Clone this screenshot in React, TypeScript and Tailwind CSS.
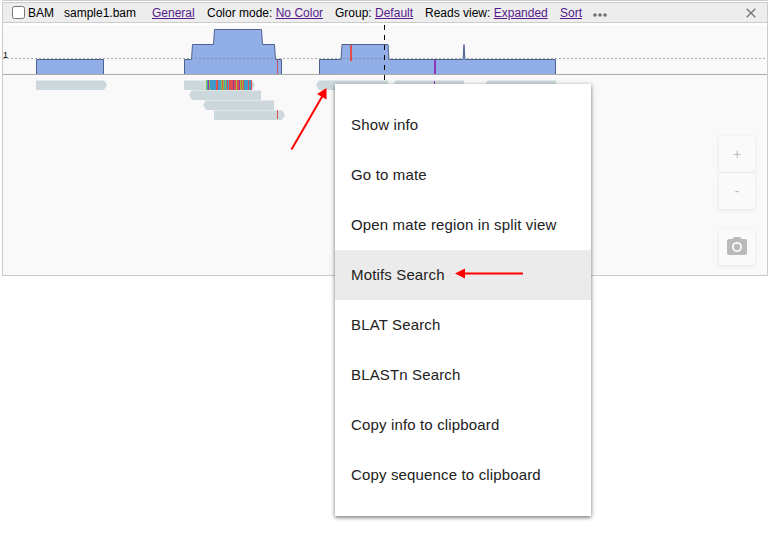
import React from "react";

const menuItems = [
  "Show info",
  "Go to mate",
  "Open mate region in split view",
  "Motifs Search",
  "BLAT Search",
  "BLASTn Search",
  "Copy info to clipboard",
  "Copy sequence to clipboard",
];

// One letter per base: g green, p purple, b blue, r red
const bases = "gbpgbbbbbbrrbbbgrgbgbrbrrrrprrgrrpgrgrbbbbrbbr";
const baseColors: Record<string, string> = {
  g: "#8fc441",
  p: "#9036b8",
  b: "#409bc8",
  r: "#e05048",
};

function Link({ children }: { children: React.ReactNode }) {
  return <a className="text-[#551a8b] underline">{children}</a>;
}

function Header() {
  return (
    <header className="flex h-5 items-center border-b border-[#ccc] bg-[#ededed] pt-px text-[12px] leading-[18px] whitespace-nowrap">
      <label className="ml-[9px] flex w-[52px] items-center">
        <input
          type="checkbox"
          className="mr-[3px] mb-px h-[13px] w-[13px] shrink-0 appearance-none rounded-[2.5px] border border-[#767676] bg-white"
        />
        BAM
      </label>
      <span className="w-[88px]">sample1.bam</span>
      <span className="w-[55px]"><Link>General</Link></span>
      <span className="w-[128px]">Color mode: <Link>No Color</Link></span>
      <span className="w-[90px]">Group: <Link>Default</Link></span>
      <span className="w-[135px]">Reads view: <Link>Expanded</Link></span>
      <span className="w-[33px]"><Link>Sort</Link></span>
      <svg width="14" height="4" className="mt-[3px]" fill="#6f6f6f">
        <circle cx="2" cy="2" r="1.8" />
        <circle cx="7" cy="2" r="1.8" />
        <circle cx="12" cy="2" r="1.8" />
      </svg>
      <svg width="10" height="10" className="mr-[11px] mb-px ml-auto" stroke="#757575" strokeWidth="1.3">
        <path d="M.7.7l8.6 8.6M9.3.7L.7 9.3" />
      </svg>
    </header>
  );
}

function Track() {
  return (
    <svg width="764" height="250" viewBox="3 25 764 250" className="mt-[2px] block bg-[#f9f9f9]">
      <g fill="#92aee7" stroke="#4f628e">
        <path d="M36.5 74V59.5H103.5V74" />
        <path d="M184.5 74V59.5H191.5L192.5 44.5H213.5L214.5 29.5H261.5L262.5 44.5H274.5L275.5 59.5H281.5V74" />
        <path d="M319.5 74V59.5H341L342 44.5H388L389 59.5H463L464 44.5L465 59.5H555.5V74" />
      </g>
      <path d="M3 58.5H767" stroke="#777" strokeOpacity=".55" strokeDasharray="2 2" />
      <path d="M3 74.5H767" stroke="#aaa" />
      <text x="3" y="58" fontSize="9" fontFamily="Liberation Sans, sans-serif">1</text>
      <path d="M277.5 60V74" stroke="#c6535f" />
      <rect x="350" y="45" width="2" height="16" fill="#e05048" />
      <rect x="434" y="60" width="2" height="14" fill="#9036b8" />

      <g fill="#cdd8dd">
        <path d="M36 80H104L107 85L104 90H36Z" />
        <path d="M184 80H252L255 85L252 90H184Z" />
        <path d="M261 90H192L189 95L192 100H261Z" />
        <path d="M274 100H206L203 105L206 110H274Z" />
        <path d="M214 110H282L285 115L282 120H214Z" />
        <path d="M388 80H319L316 85L319 90H388Z" />
        <path d="M464 80H396L393 85L396 90H464Z" />
        <path d="M556 80H488L485 85L488 90H556Z" />
      </g>
      <path d="M36 80.5H104M184 80.5H252M192 90.5H261M206 100.5H274M214 110.5H282M319 80.5H388M395 80.5H464M488 80.5H556" stroke="#e0e8e9" />
      <path d="M277.5 110V119" stroke="#e05048" />
      <path d="M434.5 81V90" stroke="#9036b8" />
      {bases.split("").map((base, i) => (
        <rect key={i} x={206 + i} y="80" width="1" height="10" fill={baseColors[base]} />
      ))}
      <path d="M384.5 25V80" stroke="#000" strokeDasharray="5 5" />
    </svg>
  );
}

function Menu() {
  return (
    <nav className="absolute top-[84px] left-[335px] h-[432px] w-64 bg-white py-4 text-[15px] tracking-[0.15px] text-[#212121] shadow-[0_1px_5px_0_rgba(0,0,0,0.35),0_2px_3px_0_rgba(0,0,0,0.25)]">
      {menuItems.map((item) => (
        <div
          key={item}
          className={`flex h-[50px] items-center px-4 ${item === "Motifs Search" ? "bg-[#ebebeb]" : ""}`}
        >
          {item}
        </div>
      ))}
    </nav>
  );
}

function Controls() {
  const button =
    "flex h-9 w-9 items-center justify-center rounded-[3px] bg-[#fafafa] text-[14px] text-[#bcbcbc] shadow-[0_1px_4px_rgba(0,0,0,0.09)]";
  return (
    <div className="absolute top-[136px] left-[719px] flex flex-col">
      <button className={button}>+</button>
      <button className={`${button} mt-px`}>-</button>
      <button className={`${button} mt-5`}>
        <svg width="24" height="24" viewBox="0 0 24 24" fill="#bababa">
          <circle cx="12" cy="12" r="3.2" />
          <path d="M9 2L7.17 4H4c-1.1 0-2 .9-2 2v12c0 1.1.9 2 2 2h16c1.1 0 2-.9 2-2V6c0-1.1-.9-2-2-2h-3.17L15 2H9zm3 15c-2.76 0-5-2.24-5-5s2.24-5 5-5 5 2.24 5 5-2.24 5-5 5z" />
        </svg>
      </button>
    </div>
  );
}

export default function App() {
  return (
    <main className="relative h-[539px] w-[770px] overflow-hidden bg-white pl-[2px] font-['Liberation_Sans',Arial,sans-serif] text-black">
      <div className="mb-px h-px w-[766px] bg-[#ccc]" />
      <section className="h-[274px] w-[766px] border border-[#ccc]">
        <Header />
        <Track />
      </section>
      <Controls />
      <Menu />
      <svg className="pointer-events-none absolute inset-0" width="770" height="539" fill="#f00" stroke="#f00">
        <path d="M291.5 149.5L323 95" strokeWidth="2" />
        <path d="M326.5 88L317 94L326.5 99.5Z" stroke="none" />
        <path d="M523 273.5H463" strokeWidth="2" />
        <path d="M455 273.5L465 268.5V278.5Z" stroke="none" />
      </svg>
    </main>
  );
}
